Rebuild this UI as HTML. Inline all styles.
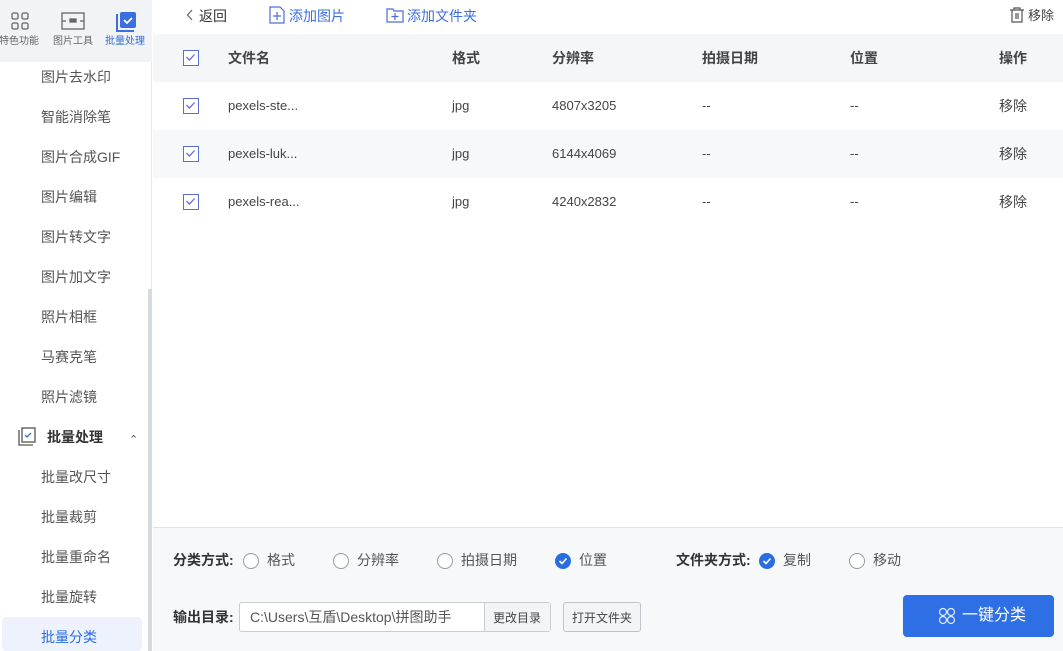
<!DOCTYPE html>
<html><head><meta charset="utf-8"><style>
*{box-sizing:border-box;margin:0;padding:0}
body{width:1063px;height:651px;overflow:hidden;background:#fff;font-family:"Liberation Sans","Noto Sans CJK SC",sans-serif;font-size:14px;line-height:20px;color:#333;position:relative}
.abs{position:absolute}
.side{left:0;top:0;width:152px;height:651px;background:#fff;border-right:1px solid #e6e8ec}
.tabs{left:0;top:0;width:152px;height:62px;background:#f2f3f5}
.tab{position:absolute;top:0;width:50px;text-align:center;font-size:10px;line-height:14px;color:#666}
.item{position:absolute;left:41px;color:#555}
.cb{position:absolute;width:16px;height:16px;border:1.5px solid #5a6fd6;background:#fff}
.cb svg{position:absolute;left:1px;top:1px}
.th{position:absolute;top:48px;font-weight:bold;color:#444}
.cell{position:absolute;color:#444}
.lat{font-size:13px}
.radio{position:absolute;width:16px;height:16px;border:1px solid #999;border-radius:50%;background:#fff}
.rchk{position:absolute;width:16px;height:16px;border-radius:50%;background:#2a6de0}
.lbl{position:absolute;color:#555}
</style></head><body>
<div class="abs side"></div>
<div class="abs tabs"></div>
<div class="tab" style="left:-6px">
 <svg class="abs" style="left:16px;top:11px" width="20" height="20" viewBox="0 0 20 20" fill="none" stroke="#666" stroke-width="1.3"><rect x="2" y="2" width="6" height="6" rx="1.5"/><rect x="12" y="2" width="6" height="6" rx="1.5"/><rect x="2" y="12" width="6" height="6" rx="1.5"/><rect x="12" y="12" width="6" height="6" rx="1.5"/></svg>
 <div style="position:absolute;top:35px;width:50px">特色功能</div></div>
<div class="tab" style="left:48px">
 <svg class="abs" style="left:13px;top:12px" width="24" height="18" viewBox="0 0 24 18" fill="none" stroke="#666" stroke-width="1.3"><rect x="1" y="1" width="22" height="16"/><line x1="1" y1="9" x2="5" y2="9"/><line x1="19" y1="9" x2="23" y2="9"/><rect x="9" y="7" width="6" height="3" fill="#666"/></svg>
 <div style="position:absolute;top:35px;width:50px">图片工具</div></div>
<div class="tab" style="left:100px;color:#2a6de0">
 <svg class="abs" style="left:14px;top:10px" width="24" height="24" viewBox="0 0 24 24"><path d="M3 4v17h17" fill="none" stroke="#3b6fe0" stroke-width="2"/><rect x="6" y="2" width="16" height="16" rx="2" fill="#3b6fe0"/><path d="M10 10l3 3 5-5" fill="none" stroke="#fff" stroke-width="1.8"/></svg>
 <div style="position:absolute;top:35px;width:50px">批量处理</div></div>

<div class="item" style="top:67px">图片去水印</div>
<div class="item" style="top:107px">智能消除笔</div>
<div class="item" style="top:147px">图片合成GIF</div>
<div class="item" style="top:187px">图片编辑</div>
<div class="item" style="top:227px">图片转文字</div>
<div class="item" style="top:267px">图片加文字</div>
<div class="item" style="top:307px">照片相框</div>
<div class="item" style="top:347px">马赛克笔</div>
<div class="item" style="top:387px">照片滤镜</div>
<svg class="abs" style="left:17px;top:427px" width="20" height="20" viewBox="0 0 20 20" fill="none" stroke="#555" stroke-width="1.3"><path d="M2 3v15h14"/><rect x="5" y="1" width="13" height="14"/><path d="M8 8l2 2 4-4" stroke="#3b6fe0"/></svg>
<div class="abs" style="left:47px;top:427px;font-weight:bold;color:#333">批量处理</div>
<div class="abs" style="left:129px;top:430px;font-size:11px;color:#555">⌃</div>
<div class="item" style="top:467px">批量改尺寸</div>
<div class="item" style="top:507px">批量裁剪</div>
<div class="item" style="top:547px">批量重命名</div>
<div class="item" style="top:587px">批量旋转</div>
<div class="abs" style="left:2px;top:617px;width:140px;height:34px;background:#eef2fd;border-radius:4px"></div>
<div class="item" style="top:627px;color:#2a6de0">批量分类</div>
<div class="abs" style="left:148px;top:289px;width:4px;height:362px;background:#d5d9e0"></div>

<!-- toolbar -->
<svg class="abs" style="left:186px;top:9px" width="8" height="12" viewBox="0 0 8 12" fill="none" stroke="#666" stroke-width="1.2"><path d="M6 1L1.5 6 6 11"/></svg>
<div class="abs" style="left:199px;top:6px;color:#333">返回</div>
<svg class="abs" style="left:269px;top:6px" width="16" height="18" viewBox="0 0 16 18" fill="none" stroke="#4a6fd6" stroke-width="1.2"><path d="M1 1h10l4 4v12H1z"/><path d="M8 6v8M4 10h8"/></svg>
<div class="abs" style="left:289px;top:6px;color:#3b6fe0">添加图片</div>
<svg class="abs" style="left:386px;top:7px" width="18" height="16" viewBox="0 0 18 16" fill="none" stroke="#4a6fd6" stroke-width="1.2"><path d="M1 2h6l1 2h9v11H1z"/><path d="M9 6v7M5.5 9.5h7"/></svg>
<div class="abs" style="left:407px;top:6px;color:#3b6fe0">添加文件夹</div>
<svg class="abs" style="left:1009px;top:7px" width="16" height="16" viewBox="0 0 16 16" fill="none" stroke="#555" stroke-width="1.2"><path d="M1 3h14M5 3V1h6v2M3 3v12h10V3M7 6v6M9 6v6"/></svg>
<div class="abs" style="left:1028px;top:6px;color:#444;font-size:13px">移除</div>

<!-- table -->
<div class="abs" style="left:153px;top:34px;width:910px;height:48px;background:#f5f6f8"></div>
<div class="abs" style="left:153px;top:130px;width:910px;height:48px;background:#f7f8fa"></div>
<div class="cb" style="left:183px;top:50px"><svg width="11" height="11" viewBox="0 0 11 11"><path d="M1.5 5l3 3 5-5.5" fill="none" stroke="#5a6fd6" stroke-width="1.3"/></svg></div>
<div class="th" style="left:228px">文件名</div>
<div class="th" style="left:452px">格式</div>
<div class="th" style="left:552px">分辨率</div>
<div class="th" style="left:702px">拍摄日期</div>
<div class="th" style="left:850px">位置</div>
<div class="th" style="left:999px">操作</div>

<div class="cb" style="left:183px;top:98px"><svg width="11" height="11" viewBox="0 0 11 11"><path d="M1.5 5l3 3 5-5.5" fill="none" stroke="#5a6fd6" stroke-width="1.3"/></svg></div>
<div class="cell lat" style="left:228px;top:96px">pexels-ste...</div><div class="cell lat" style="left:452px;top:96px">jpg</div><div class="cell lat" style="left:552px;top:96px">4807x3205</div><div class="cell lat" style="left:702px;top:96px">--</div><div class="cell lat" style="left:850px;top:96px">--</div><div class="cell" style="left:999px;top:96px">移除</div>
<div class="cb" style="left:183px;top:146px"><svg width="11" height="11" viewBox="0 0 11 11"><path d="M1.5 5l3 3 5-5.5" fill="none" stroke="#5a6fd6" stroke-width="1.3"/></svg></div>
<div class="cell lat" style="left:228px;top:144px">pexels-luk...</div><div class="cell lat" style="left:452px;top:144px">jpg</div><div class="cell lat" style="left:552px;top:144px">6144x4069</div><div class="cell lat" style="left:702px;top:144px">--</div><div class="cell lat" style="left:850px;top:144px">--</div><div class="cell" style="left:999px;top:144px">移除</div>
<div class="cb" style="left:183px;top:194px"><svg width="11" height="11" viewBox="0 0 11 11"><path d="M1.5 5l3 3 5-5.5" fill="none" stroke="#5a6fd6" stroke-width="1.3"/></svg></div>
<div class="cell lat" style="left:228px;top:192px">pexels-rea...</div><div class="cell lat" style="left:452px;top:192px">jpg</div><div class="cell lat" style="left:552px;top:192px">4240x2832</div><div class="cell lat" style="left:702px;top:192px">--</div><div class="cell lat" style="left:850px;top:192px">--</div><div class="cell" style="left:999px;top:192px">移除</div>

<!-- bottom -->
<div class="abs" style="left:153px;top:527px;width:910px;height:124px;background:#f7f8fa;border-top:1px solid #dfe2e7"></div>
<div class="abs" style="left:173px;top:550px;font-weight:bold;color:#333">分类方式:</div>
<div class="radio" style="left:243px;top:553px"></div><div class="lbl" style="left:267px;top:550px">格式</div>
<div class="radio" style="left:333px;top:553px"></div><div class="lbl" style="left:357px;top:550px">分辨率</div>
<div class="radio" style="left:437px;top:553px"></div><div class="lbl" style="left:461px;top:550px">拍摄日期</div>
<div class="rchk" style="left:555px;top:553px"><svg width="16" height="16"><path d="M4.5 8l2.5 2.5 4.5-5" fill="none" stroke="#fff" stroke-width="1.6"/></svg></div><div class="lbl" style="left:579px;top:550px">位置</div>
<div class="abs" style="left:676px;top:550px;font-weight:bold;color:#333">文件夹方式:</div>
<div class="rchk" style="left:759px;top:553px"><svg width="16" height="16"><path d="M4.5 8l2.5 2.5 4.5-5" fill="none" stroke="#fff" stroke-width="1.6"/></svg></div><div class="lbl" style="left:783px;top:550px">复制</div>
<div class="radio" style="left:849px;top:553px"></div><div class="lbl" style="left:873px;top:550px">移动</div>

<div class="abs" style="left:173px;top:607px;font-weight:bold;color:#333">输出目录:</div>
<div class="abs" style="left:239px;top:602px;width:312px;height:30px;background:#fff;border:1px solid #c8ccd2;border-radius:3px"></div>
<div class="abs" style="left:484px;top:603px;width:66px;height:28px;background:#f3f4f6;border-left:1px solid #c8ccd2"></div>
<div class="abs" style="left:250px;top:607px;color:#555">C:\Users\互盾\Desktop\拼图助手</div>
<div class="abs" style="left:493px;top:608px;font-size:12px;color:#444">更改目录</div>
<div class="abs" style="left:563px;top:602px;width:78px;height:30px;background:#f3f4f6;border:1px solid #c0c4ca;border-radius:3px"></div>
<div class="abs" style="left:572px;top:608px;font-size:12px;color:#444">打开文件夹</div>
<div class="abs" style="left:903px;top:595px;width:151px;height:42px;background:#2e6fe6;border-radius:4px"></div>
<svg class="abs" style="left:937px;top:606px" width="20" height="20" viewBox="0 0 20 20" fill="none" stroke="#fff" stroke-width="1.2" opacity=".85"><circle cx="6" cy="6" r="3.5"/><circle cx="14" cy="6" r="3.5"/><circle cx="6" cy="14" r="3.5"/><circle cx="14" cy="14" r="3.5"/></svg>
<div class="abs" style="left:962px;top:604px;font-size:16px;line-height:24px;color:#fff">一键分类</div>
</body></html>
